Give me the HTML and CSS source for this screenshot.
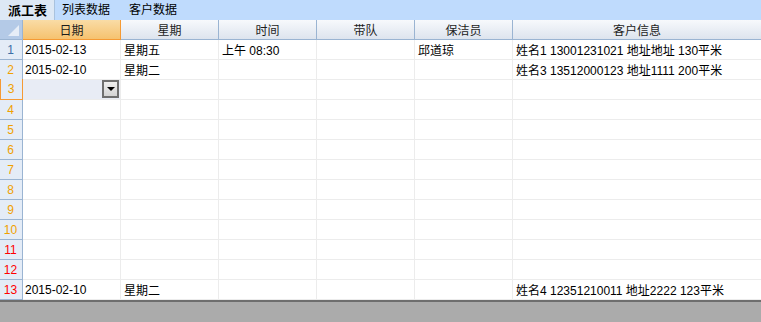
FILE: index.html
```html
<!DOCTYPE html>
<html>
<head>
<meta charset="utf-8">
<link rel="stylesheet" href="styles.css">
</head>
<body>
<div class="app">
  <div class="tabs">
    <div class="tab active">派工表</div>
    <div class="tab">列表数据</div>
    <div class="tab">客户数据</div>
  </div>
  <div class="grid">
    <div class="corner"><span class="tri"></span></div>
    <div class="hd sel">日期</div>
    <div class="hd">星期</div>
    <div class="hd">时间</div>
    <div class="hd">带队</div>
    <div class="hd">保洁员</div>
    <div class="hd last">客户信息</div>

    <div class="rh c-blue">1</div>
    <div class="cell date">2015-02-13</div><div class="cell">星期五</div><div class="cell">上午 08:30</div><div class="cell"></div><div class="cell">邱道琼</div><div class="cell last">姓名1 13001231021 地址地址 130平米</div>

    <div class="rh c-org">2</div>
    <div class="cell date">2015-02-10</div><div class="cell">星期二</div><div class="cell"></div><div class="cell"></div><div class="cell"></div><div class="cell last">姓名3 13512000123 地址1111 200平米</div>

    <div class="rh c-org rsel">3</div>
    <div class="cell date active-cell"><span class="dd"><span class="arrow"></span></span></div><div class="cell"></div><div class="cell"></div><div class="cell"></div><div class="cell"></div><div class="cell last"></div>

    <div class="rh c-org">4</div>
    <div class="cell"></div><div class="cell"></div><div class="cell"></div><div class="cell"></div><div class="cell"></div><div class="cell last"></div>
    <div class="rh c-org">5</div>
    <div class="cell"></div><div class="cell"></div><div class="cell"></div><div class="cell"></div><div class="cell"></div><div class="cell last"></div>
    <div class="rh c-org">6</div>
    <div class="cell"></div><div class="cell"></div><div class="cell"></div><div class="cell"></div><div class="cell"></div><div class="cell last"></div>
    <div class="rh c-org">7</div>
    <div class="cell"></div><div class="cell"></div><div class="cell"></div><div class="cell"></div><div class="cell"></div><div class="cell last"></div>
    <div class="rh c-org">8</div>
    <div class="cell"></div><div class="cell"></div><div class="cell"></div><div class="cell"></div><div class="cell"></div><div class="cell last"></div>
    <div class="rh c-org">9</div>
    <div class="cell"></div><div class="cell"></div><div class="cell"></div><div class="cell"></div><div class="cell"></div><div class="cell last"></div>
    <div class="rh c-org">10</div>
    <div class="cell"></div><div class="cell"></div><div class="cell"></div><div class="cell"></div><div class="cell"></div><div class="cell last"></div>
    <div class="rh c-red">11</div>
    <div class="cell"></div><div class="cell"></div><div class="cell"></div><div class="cell"></div><div class="cell"></div><div class="cell last"></div>
    <div class="rh c-red">12</div>
    <div class="cell"></div><div class="cell"></div><div class="cell"></div><div class="cell"></div><div class="cell"></div><div class="cell last"></div>
    <div class="rh c-red">13</div>
    <div class="cell date">2015-02-10</div><div class="cell">星期二</div><div class="cell"></div><div class="cell"></div><div class="cell"></div><div class="cell last">姓名4 12351210011 地址2222 123平米</div>
  </div>
  <div class="footer"></div>
</div>
</body>
</html>
```

FILE: styles.css
```css
* { box-sizing: border-box; }
html, body { margin: 0; padding: 0; }
body {
  width: 761px;
  height: 322px;
  overflow: hidden;
  background: #ababab;
  font-family: "Liberation Sans", "Noto Sans CJK SC", sans-serif;
  font-size: 12px;
  color: #000;
}
.app { display: flex; flex-direction: column; height: 322px; }

.tabs {
  height: 20px;
  background: #bfdbfd;
  display: flex;
  align-items: stretch;
}
.tab {
  display: flex;
  align-items: center;
  padding: 0 10px 0 9px;
  font-size: 12px;
  line-height: 1;
  color: #000;
}
.tab.active {
  background: #dde8f5;
  border-right: 1px solid #a9c2de;
  font-weight: bold;
  font-size: 13px;
  padding: 0 6px 0 8px;
  width: 55px;
}
.tab + .tab { padding-left: 7px; padding-right: 12px; }

.grid {
  display: grid;
  grid-template-columns: 23px repeat(5, 98px) 1fr;
  grid-auto-rows: 20px;
  background: #fff;
}
.corner {
  background: #b4cae7;
  border-right: 1px solid #9ab4d2;
  border-bottom: 1px solid #9ab4d2;
  position: relative;
}
.corner .tri {
  position: absolute;
  right: 3px;
  bottom: 3px;
  width: 0; height: 0;
  border-left: 11px solid transparent;
  border-bottom: 11px solid #e6edf7;
}
.hd {
  display: flex;
  align-items: center;
  justify-content: center;
  background: linear-gradient(#f7f9fc, #dde4ee);
  border-right: 1px solid #9ab4d2;
  border-bottom: 1px solid #9ab4d2;
  color: #1c1c1c;
}
.hd.sel {
  background: linear-gradient(#f9dca6, #f6c26f);
  border-left: 1px solid #f59a34;
  border-right: 1px solid #f59a34;
  border-bottom: 1px solid #f59a34;
  margin-left: -1px;
}
.hd.last { border-right: none; }

.rh {
  display: flex;
  align-items: center;
  justify-content: center;
  background: #e4ecf7;
  border-right: 1px solid #9ab4d2;
  border-bottom: 1px solid #9ab4d2;
  padding-right: 1px;
}
.rh.rsel {
  border: 1px solid #f59a34;
  border-top: none;
  margin-top: -1px;
  height: 21px;
}
.c-blue { color: #3c6ea6; }
.c-org { color: #f0a000; }
.c-red { color: #ff0000; }

.cell {
  display: flex;
  align-items: center;
  padding-left: 3px;
  border-right: 1px solid #ececec;
  border-bottom: 1px solid #ececec;
  white-space: nowrap;
  overflow: hidden;
  position: relative;
}
.cell.date { padding-left: 2px; }
.cell.last { border-right: none; }
.cell.active-cell {
  background: #e8ecf5;
  justify-content: flex-end;
  padding-right: 1px;
}
.dd {
  width: 17px;
  height: 18px;
  border: 2px solid #6f6f6f;
  background: linear-gradient(#eeeeee, #d4d4d4);
  display: flex;
  align-items: center;
  justify-content: center;
  margin-top: -1px;
}
.arrow {
  width: 0; height: 0;
  border-left: 4px solid transparent;
  border-right: 4px solid transparent;
  border-top: 4px solid #000;
}

.footer {
  flex: 1;
  background: #ababab;
  border-top: 2px solid #6e6e6e;
}
```
